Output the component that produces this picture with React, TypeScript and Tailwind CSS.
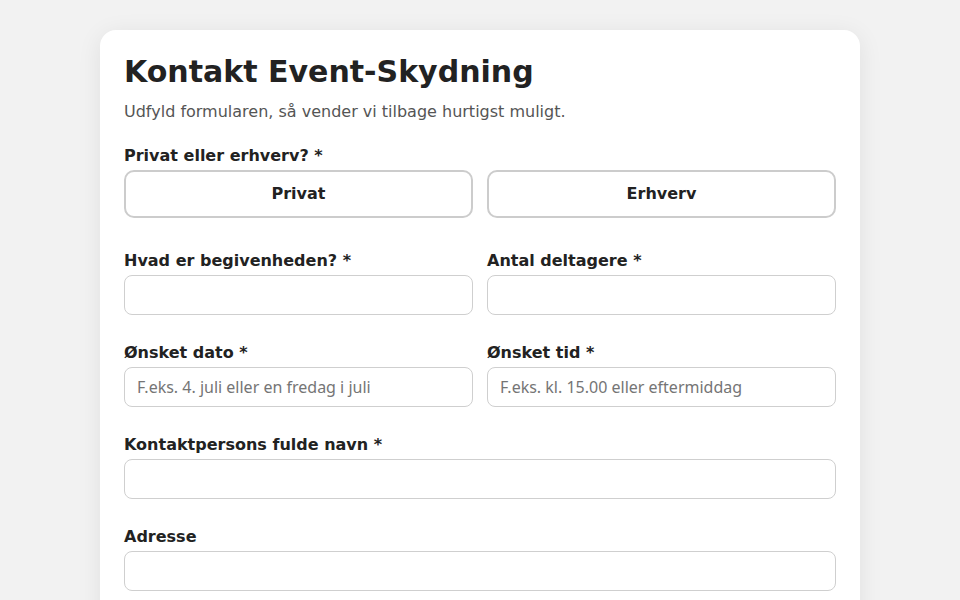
import { useState } from 'react'

type Kind = 'privat' | 'erhverv' | null

function Label({ children }: { children: React.ReactNode }) {
  return <label className="block pt-px text-[16px] leading-5 font-bold text-[#222] mb-1">{children}</label>
}

function Input({ placeholder }: { placeholder?: string }) {
  return (
    <input
      placeholder={placeholder}
      className="block w-full h-10 px-3 rounded-lg border border-[#cfcfcf] bg-white text-[16px] text-[#222] placeholder:text-[#757575] outline-none [font-family:'Noto_Sans',sans-serif]"
    />
  )
}

export default function App() {
  const [kind, setKind] = useState<Kind>(null)

  return (
    <div className="min-h-screen bg-[#f2f2f2] pt-[30px] font-['DejaVu_Sans',sans-serif]">
      <div className="mx-auto w-[760px] bg-white rounded-2xl shadow-[0_4px_24px_rgba(0,0,0,0.08)] px-6 pt-6 pb-10">
        <h1 className="text-[30px] leading-[36px] font-bold text-[#222]">Kontakt Event-Skydning</h1>
        <p className="mt-[10px] text-[16px] leading-6 text-[#555]">
          Udfyld formularen, så vender vi tilbage hurtigst muligt.
        </p>

        {/* Privat / erhverv */}
        <div className="mt-[21px]">
          <Label>Privat eller erhverv? *</Label>
          <div className="grid grid-cols-2 gap-[14px]">
            {(['privat', 'erhverv'] as const).map((k) => (
              <button
                key={k}
                onClick={() => setKind(k)}
                className={`h-12 rounded-[10px] border-2 bg-white text-[16px] font-bold text-[#222] ${
                  kind === k ? 'border-[#222]' : 'border-[#cccccc]'
                }`}
              >
                {k === 'privat' ? 'Privat' : 'Erhverv'}
              </button>
            ))}
          </div>
        </div>

        <div className="mt-8 flex flex-col gap-[27px]">
          <div className="grid grid-cols-2 gap-[14px]">
            <div>
              <Label>Hvad er begivenheden? *</Label>
              <Input />
            </div>
            <div>
              <Label>Antal deltagere *</Label>
              <Input />
            </div>
          </div>

          <div className="grid grid-cols-2 gap-[14px]">
            <div>
              <Label>Ønsket dato *</Label>
              <Input placeholder="F.eks. 4. juli eller en fredag i juli" />
            </div>
            <div>
              <Label>Ønsket tid *</Label>
              <Input placeholder="F.eks. kl. 15.00 eller eftermiddag" />
            </div>
          </div>

          <div>
            <Label>Kontaktpersons fulde navn *</Label>
            <Input />
          </div>

          <div>
            <Label>Adresse</Label>
            <Input />
          </div>
        </div>
      </div>
    </div>
  )
}
